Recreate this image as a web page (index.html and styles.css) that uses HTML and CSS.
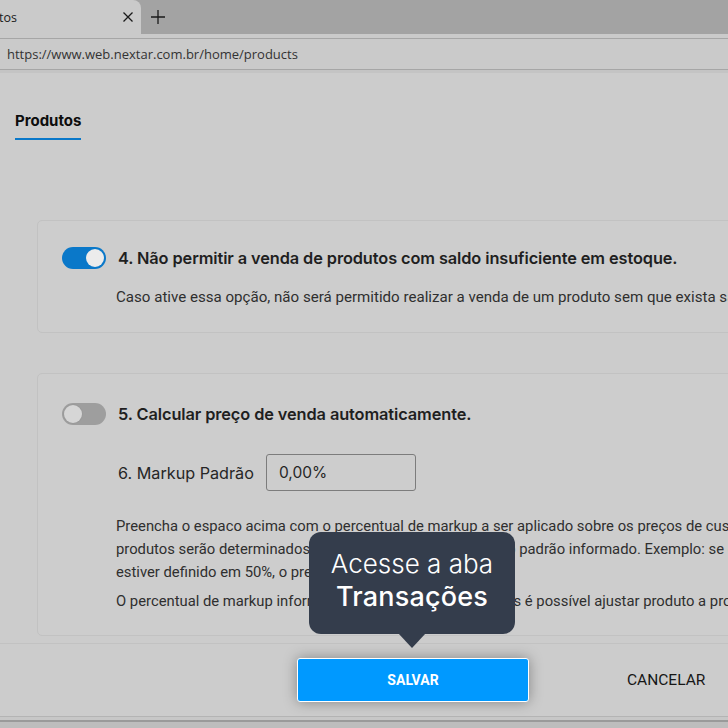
FILE: index.html
```html
<!DOCTYPE html>
<html lang="pt-BR">
<head>
<meta charset="utf-8">
<title>Produtos</title>
<link rel="stylesheet" href="styles.css">
</head>
<body>
<div class="tabbar">
  <div class="tab">
    <span class="tab-title">tos</span>
    <svg class="tab-close" width="12" height="12" viewBox="0 0 12 12"><path d="M1.5 1.5L10.5 10.5M10.5 1.5L1.5 10.5" stroke="#1a1a1a" stroke-width="1.3" fill="none"/></svg>
  </div>
  <svg class="tab-new" width="16" height="16" viewBox="0 0 16 16"><path d="M8 1V15M1 8H15" stroke="#1a1a1a" stroke-width="1.3" fill="none"/></svg>
</div>
<div class="addr-wrap">
  <div class="addr">https://www.web.nextar.com.br/home/products</div>
</div>
<main class="page">
  <div class="heading"><span class="heading-tab">Produtos</span></div>

  <section class="card card-one">
    <div class="opt-row">
      <span class="toggle on"><span class="knob"></span></span>
      <span class="opt-title">4. Não permitir a venda de produtos com saldo insuficiente em estoque.</span>
    </div>
    <p class="desc">Caso ative essa opção, não será permitido realizar a venda de um produto sem que exista saldo suficiente em estoque.</p>
  </section>

  <section class="card card-two">
    <div class="opt-row">
      <span class="toggle off"><span class="knob"></span></span>
      <span class="opt-title">5. Calcular preço de venda automaticamente.</span>
    </div>
    <div class="markup-row">
      <label class="markup-label">6. Markup Padrão</label>
      <div class="markup-input">0,00%</div>
    </div>
    <p class="desc para">Preencha o espaco acima com o percentual de markup a ser aplicado sobre os preços de custo dos<br>produtos serão determinados automaticamente pelo markup padrão informado. Exemplo: se o markup<br>estiver definido em 50%, o preço será R$ 15,00.</p>
    <p class="desc para">O percentual de markup informado será aplicado em insumos é possível ajustar produto a produto.</p>
  </section>

  <footer class="footer">
    <button class="btn-save">SALVAR</button>
    <button class="btn-cancel">CANCELAR</button>
  </footer>
  <div class="bottom-strip"></div>

  <div class="tooltip">
    <span class="tip-light">Acesse a aba</span>
    <span class="tip-bold">Transações</span>
  </div>
</main>
</body>
</html>
```

FILE: styles.css
```css
* { box-sizing: border-box; }
html, body { margin: 0; padding: 0; }
body {
  width: 728px;
  height: 728px;
  overflow: hidden;
  background: #cccccc;
  font-family: "Inter", "Roboto", sans-serif;
  position: relative;
}

.tabbar {
  height: 34px;
  background: #a3a3a3;
  display: flex;
  align-items: center;
}
.tab {
  width: 141px;
  height: 34px;
  background: #cacaca;
  border-top-right-radius: 8px;
  display: flex;
  align-items: center;
  justify-content: space-between;
  padding: 0 7px 0 0;
  font-family: "Open Sans", "Noto Sans", sans-serif;
  font-size: 12.5px;
  color: #1a1a1a;
}
.tab-title { margin-left: -1px; }
.tab-new { margin-left: 9px; }

.addr-wrap {
  background: #cacaca;
  padding-top: 4px;
  border-bottom: 3px solid #c4c4c4;
}
.addr {
  height: 32px;
  border-top: 1px solid #a6a6a6;
  border-bottom: 1px solid #a6a6a6;
  padding-left: 7px;
  display: flex;
  align-items: center;
  font-family: "Open Sans", "Noto Sans", sans-serif;
  font-size: 13px;
  color: #333;
}

.page {
  position: relative;
}
.heading {
  padding: 37px 0 0 15px;
}
.heading-tab {
  display: inline-block;
  font-weight: 700;
  font-size: 15px;
  line-height: 18px;
  color: #0d0d0d;
  padding-bottom: 8px;
  border-bottom: 2px solid #0a78c9;
}

.card {
  margin-left: 37px;
  width: 760px;
  border: 1px solid #c2c2c2;
  border-radius: 5px;
  background: #cdcdcd;
}
.card-one {
  margin-top: 80px;
  height: 113px;
  padding: 26px 0 0 24px;
}
.card-two {
  margin-top: 40px;
  height: 263px;
  padding: 29px 0 0 24px;
}

.opt-row {
  display: flex;
  align-items: center;
  gap: 12px;
  height: 22px;
}
.toggle {
  width: 44px;
  height: 22px;
  border-radius: 11px;
  position: relative;
  flex: none;
}
.toggle.on { background: #0a78c9; }
.toggle.off { background: #9e9e9e; }
.knob {
  position: absolute;
  top: 2px;
  width: 18px;
  height: 18px;
  border-radius: 50%;
  background: #ececec;
}
.toggle.on .knob { right: 2px; }
.toggle.off .knob { left: 2px; background: #d6d6d6; box-shadow: 0 0 0 1px #9a9a9a; }

.opt-title {
  font-weight: 600;
  font-size: 16.35px;
  color: #1f1f1f;
  letter-spacing: -0.1px;
}

.desc {
  margin: 18px 0 0 54px;
  font-family: "Roboto", sans-serif;
  font-size: 15.1px;
  line-height: 20px;
  color: #2f2f2f;
  white-space: nowrap;
}

.markup-row {
  display: flex;
  align-items: center;
  margin: 29px 0 0 56px;
  gap: 12px;
}
.markup-label {
  font-size: 16.2px;
  color: #262626;
}
.markup-input {
  width: 150px;
  height: 37px;
  border: 1px solid #7c7c7c;
  border-radius: 3px;
  padding-left: 12px;
  display: flex;
  align-items: center;
  font-size: 15.5px;
  color: #262626;
}

.para {
  font-size: 14.8px;
  line-height: 23px;
  margin: 24px 0 0 54px;
}
.para + .para { margin-top: 6px; }

.footer {
  margin-top: 7px;
  height: 73px;
  border-top: 1px solid #c2c2c2;
  display: flex;
  align-items: center;
  padding-left: 297px;
}
.btn-save {
  width: 232px;
  height: 44px;
  background: #0099ff;
  border: 1px solid #ffffff;
  border-radius: 3px;
  color: #ffffff;
  font-family: "Roboto", sans-serif;
  font-weight: 700;
  font-size: 14px;
  box-shadow: 0 0 14px rgba(0, 0, 0, 0.35);
  position: relative;
  z-index: 2;
}
.btn-cancel {
  margin-left: 98px;
  background: none;
  border: none;
  padding: 0;
  font-family: "Roboto", sans-serif;
  font-size: 15.5px;
  color: #161616;
}
.bottom-strip {
  height: 12px;
  border-top: 1px solid #b4b4b4;
  background: #c7c7c7;
  position: relative;
}
.bottom-strip::after {
  content: "";
  position: absolute;
  left: 0; right: 0; top: 3px; bottom: 0;
  border-top: 2px solid #9a9a9a;
  background: #bdbdbd;
}

.tooltip {
  position: absolute;
  left: 309px;
  top: 459px;
  width: 206px;
  height: 102px;
  background: #343d4c;
  border-radius: 12px;
  display: flex;
  flex-direction: column;
  align-items: center;
  justify-content: center;
  color: #ffffff;
  font-size: 26px;
  line-height: 33px;
  padding-bottom: 6px;
  z-index: 3;
}
.tooltip::after {
  content: "";
  position: absolute;
  left: 50%;
  bottom: -14px;
  margin-left: -14px;
  border-left: 14px solid transparent;
  border-right: 14px solid transparent;
  border-top: 15px solid #343d4c;
}
.tip-light { font-weight: 300; }
.tip-bold { font-weight: 500; font-size: 27px; letter-spacing: 0.2px; }
```
